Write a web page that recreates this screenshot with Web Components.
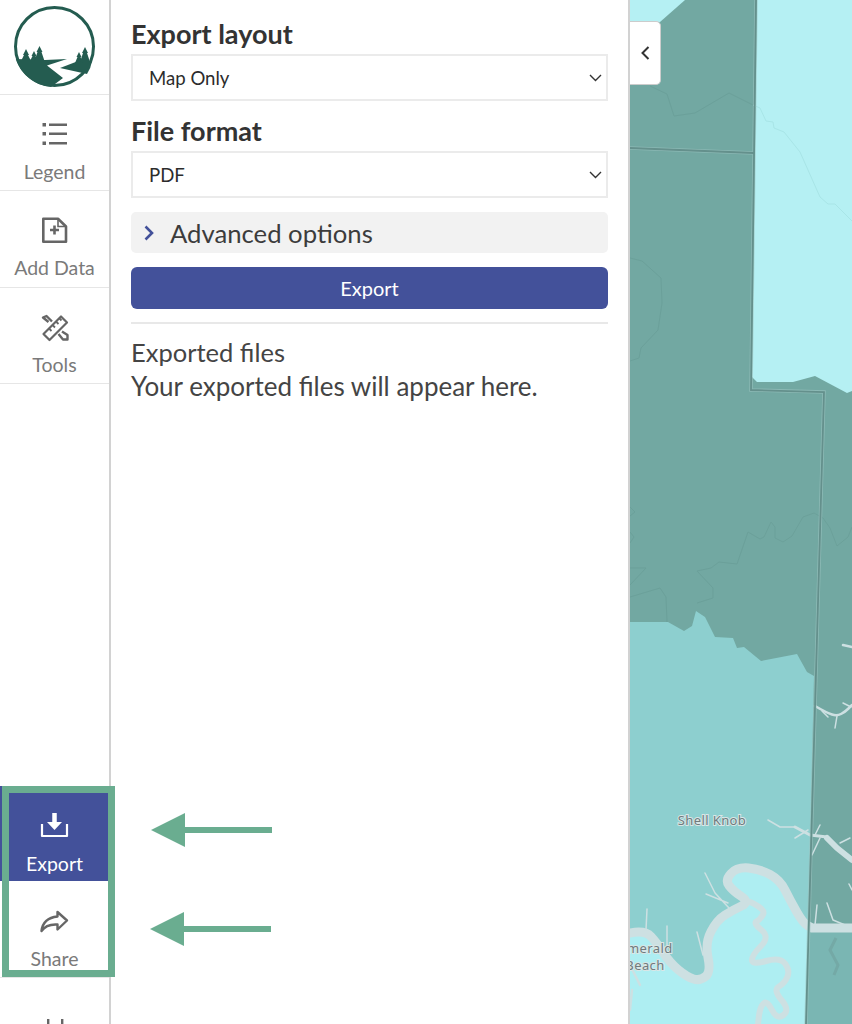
<!DOCTYPE html>
<html>
<head>
<meta charset="utf-8">
<title>Export</title>
<style>
    html, body { margin: 0; padding: 0; height: 100%; overflow: hidden; background: #fff; }
    body { font-family: "Lato", "Noto Sans", sans-serif; }
</style>
</head>
<body>
<app-shell>
    <app-rail slot="rail">
        <rail-item label="Legend" icon="legend"></rail-item>
        <rail-item label="Add Data" icon="add"></rail-item>
        <rail-item label="Tools" icon="tools"></rail-item>
        <div slot="bottom" style="flex: none">
            <rail-item label="Export" icon="export" active style="--pad: 27px; --gap: 12px; height: 95px"></rail-item>
            <rail-item label="Share" icon="share" style="--pad: 29px; --gap: 10px"></rail-item>
            <rail-item icon="more" style="--pad: 41px"></rail-item>
        </div>
    </app-rail>
    <export-panel slot="panel"></export-panel>
    <map-view slot="map"></map-view>
</app-shell>
<tour-callout></tour-callout>

<script>
const ICONS = {
    legend: `<svg width="27" height="27" viewBox="0 0 27 27" fill="#666">
        <rect x="1.500" y="2" width="3.500" height="3.500"/><rect x="1.500" y="11" width="3.500" height="3.500"/><rect x="1.500" y="20.500" width="3.500" height="3.500"/>
        <rect x="8" y="2.500" width="18" height="2.500"/><rect x="8" y="11.500" width="18" height="2.500"/><rect x="8" y="21" width="18" height="2.500"/></svg>`,
    add: `<svg width="27" height="27" viewBox="0 0 27 27" fill="none" stroke="#666" stroke-width="2.600">
        <path d="M2.300 1.800H17L25 9.500V24.700H2.300Z" stroke-linejoin="round"/><path d="M17 1.800V9.500H25" stroke-width="1.600"/>
        <path d="M13.500 8.500V17.500M9 13H18"/></svg>`,
    tools: `<svg width="28" height="28" viewBox="0 0 28 28" fill="none" stroke="#666" stroke-width="2.200" stroke-linejoin="round">
        <path d="M20 2.500L26 8.500L8.500 26L2.500 20Z"/>
        <path d="M8 14.500L10.500 17M11.500 11L14 13.500M15 7.500L17.500 10M18.500 4.500L20.500 6.500" stroke-width="1.800"/>
        <path d="M7.500 8L2 3.500L5.500 2L11 7.500M17.500 20L22 25.500H26.500V21L21 17.500" stroke-width="2.400"/></svg>`,
    export: `<svg width="29" height="26" viewBox="0 0 29 26" fill="none" stroke="#fff" stroke-width="2.200">
        <path d="M2 11V23H27V11" stroke-linejoin="round"/>
        <path d="M14.500 0V10.500" stroke-width="4.500"/><path d="M7 9H22L14.500 17Z" fill="#fff" stroke="none"/></svg>`,
    share: `<svg width="29" height="24" viewBox="0 0 29 24" fill="none" stroke="#666" stroke-width="2.400" stroke-linejoin="round">
        <path d="M17.500 2L27 10.500L17.500 19.500V14.500C10 14 4.500 16.500 1.500 21C2.500 12.500 8.500 7.500 17.500 6.500Z"/></svg>`,
    more: `<svg width="27" height="27" viewBox="0 0 27 27" fill="#666"><rect x="6" y="0" width="2.400" height="27"/><rect x="20" y="0" width="2.400" height="27"/></svg>`
};

// rounds a list of points through their midpoints, used for the river and its banks
function smooth(points) {
    let d = `M${points[0][0]} ${points[0][1]}`;
    for (let i = 1; i < points.length - 1; i++) {
        const mx = (points[i][0] + points[i + 1][0]) / 2;
        const my = (points[i][1] + points[i + 1][1]) / 2;
        d += `Q${points[i][0]} ${points[i][1]} ${mx} ${my}`;
    }
    const last = points[points.length - 1];
    return d + `L${last[0]} ${last[1]}`;
}

const RIVER = [[630,933],[645,930],[657,943],[670,963],[687,977],[700,981],[711,972],[705,943],[717,920],[733,910],[750,902],[733,891],[725,880],[737,867],[760,869],[780,880],[790,900],[803,923],[812,928]];
const BEND = [[750,902],[766,909],[760,920],[753,923],[770,937],[752,955],[752,965],[780,957],[790,970],[785,983],[773,990],[790,1010],[777,1020],[767,1000],[760,1007],[758,1024]];

class AppShell extends HTMLElement {
    constructor() {
        super();
        this.attachShadow({ mode: "open" }).innerHTML = `
        <style>
            :host { display: grid; grid-template-columns: 111px 519px 222px; height: 1024px; overflow: hidden; }
        </style>
        <slot name="rail"></slot>
        <slot name="panel"></slot>
        <slot name="map"></slot>`;
    }
}

class AppRail extends HTMLElement {
    constructor() {
        super();
        this.attachShadow({ mode: "open" }).innerHTML = `
        <style>
            :host { display: flex; flex-direction: column; height: 1024px; overflow: hidden; box-sizing: border-box; border-right: 2px solid #d2d2d2; background: #fff; }
            .logo { height: 94px; flex: none; border-bottom: 1px solid #e6e6e6; display: flex; justify-content: center; }
            .gap { flex: none; height: 402px; }
        </style>
        <div class="logo">
            <svg width="109" height="94" viewBox="0 0 109 94">
                <circle cx="54.500" cy="46.500" r="39" fill="none" stroke="#245c50" stroke-width="3"/>
                <g fill="#245c50">
                    <path d="M15.800 59 L45 60 L67 59 L47 65.500 L63 78 L51 87 A40.500 40.500 0 0 1 15.800 59Z"/>
                    <path d="M60 68 L77 61.500 L92 61 Q91 68 87 74 Z"/>
                    <path d="M26 49 L29 55 L28 55 L31 61 L21 61 L24 55 L23 55Z"/>
                    <path d="M34 51 L36.500 56 L35.500 56 L38 61 L30 61 L32.500 56 L31.500 56Z"/>
                    <path d="M39.500 46 L42.500 52 L41.500 52 L44.500 61 L34.500 61 L37.500 52 L36.500 52Z"/>
                    <path d="M79 52 L81.500 57 L80.500 57 L83 63 L75 63 L77.500 57 L76.500 57Z"/>
                    <path d="M85 47 L88 53 L87 53 L90 62 L80 62 L83 53 L82 53Z"/>
                </g>
            </svg>
        </div>
        <slot></slot>
        <div class="gap"></div>
        <slot name="bottom"></slot>`;
    }
}

class RailItem extends HTMLElement {
    constructor() {
        super();
        this.attachShadow({ mode: "open" });
    }
    connectedCallback() {
        const label = this.getAttribute("label");
        this.shadowRoot.innerHTML = `
        <style>
            :host { display: block; flex: none; height: 96.400px; box-sizing: border-box; border-bottom: 1px solid #e6e6e6; font-size: 19.500px; color: #7a7a7a; text-align: center; }
            :host([active]) { background: #43519a; color: #fff; border-bottom: 0; }
            .box { display: flex; flex-direction: column; align-items: center; padding-top: var(--pad, 26px); box-sizing: border-box; gap: var(--gap, 12px); }
            svg { display: block; flex: none; }
            .icon { height: 27px; }
            span { line-height: 24px; }
        </style>
        <div class="box">
            <div class="icon">${ICONS[this.getAttribute("icon")]}</div>
            ${label ? `<span>${label}</span>` : ""}
        </div>`;
    }
}

class FieldSelect extends HTMLElement {
    constructor() {
        super();
        this.attachShadow({ mode: "open" }).innerHTML = `
        <style>
            :host { display: flex; align-items: center; justify-content: space-between; height: 47px; box-sizing: border-box; border: 2px solid #ebebeb; padding: 0 4px 0 16px; font-size: 18.600px; color: #2c2c2c; background: #fff; }
        </style>
        <slot></slot>
        <svg width="13" height="8" viewBox="0 0 13 8" fill="none" stroke="#333" stroke-width="1.400"><path d="M1 1L6.500 6.500L12 1"/></svg>`;
    }
}

class ExportPanel extends HTMLElement {
    constructor() {
        super();
        this.attachShadow({ mode: "open" }).innerHTML = `
        <style>
            :host { display: block; box-sizing: border-box; height: 1024px; padding: 16px 20px 0 20px; border-right: 2px solid #d2d2d2; background: #fff; color: #444; }
            h3 { margin: 0 0 4px; font-size: 27px; line-height: 35px; font-weight: 700; color: #333; }
            h3 + field-select { margin-top: -1px; }
            .second { margin-top: 12px; }
            .advanced { margin-top: 14px; height: 41px; background: #f2f2f2; border-radius: 5px; display: flex; align-items: center; font-size: 25.700px; gap: 16px; padding-left: 13px; color: #3c3c3c; }
            button { display: block; width: 100%; margin-top: 14px; height: 42px; border: 0; border-radius: 6px; background: #43519a; color: #fff; font: inherit; font-size: 20px; }
            hr { border: 0; border-top: 2px solid #e8e8e8; margin: 13px 0 11px; }
            p { margin: 0; font-size: 26px; line-height: 34px; }
            .title { font-size: 25.500px; }
        </style>
        <h3>Export layout</h3>
        <field-select>Map Only</field-select>
        <h3 class="second">File format</h3>
        <field-select>PDF</field-select>
        <div class="advanced">
            <svg width="10" height="16" viewBox="0 0 10 16" fill="none" stroke="#43519a" stroke-width="2.600"><path d="M1.500 1.500L8 8L1.500 14.500"/></svg>
            <span>Advanced options</span>
        </div>
        <button>Export</button>
        <hr>
        <p class="title">Exported files</p>
        <p>Your exported files will appear here.</p>`;
    }
}

class MapView extends HTMLElement {
    constructor() {
        super();
        this.attachShadow({ mode: "open" }).innerHTML = `
        <style>
            :host { display: block; position: relative; height: 1024px; overflow: hidden; background: #72a8a2; }
            svg { display: block; }
            .tab { position: absolute; left: 0; top: 21px; width: 31px; height: 64px; box-sizing: border-box; background: #fff; border: 1px solid #ccc; border-left: 0; border-radius: 0 5px 5px 0; display: flex; align-items: center; justify-content: center; }
            text { font-family: "Noto Sans", sans-serif; font-size: 13px; letter-spacing: .4px; fill: #6f7b7d; stroke: #d9e6e6; stroke-width: 2px; paint-order: stroke; }
        </style>
        <svg width="222" height="1024" viewBox="630 0 222 1024">
            <!-- land and lake fills -->
            <rect x="630" y="0" width="222" height="1024" fill="#72a8a2"/>
            <path d="M630 0H685L660 22H630Z" fill="#b5f0f3"/>
            <path d="M757 0H852V391L847 393L815 376L793 382L757 382L752 377Z" fill="#b5f0f3"/>
            <path d="M630 622H668L684 631L692 626L696 611L705 617L715 637L733 638L737 648L744 647L761 661L797 654L807 672L814 676L806 1024H630Z" fill="#8dcfcf"/>
            <path d="${smooth(RIVER)}L806 1024H630Z" fill="#aeeef2"/>
            <path d="M810 925H852V1024H806Z" fill="#7ab6b3"/>
            <path d="M836 938L830 950L838 965L834 975" fill="none" stroke="#74a9a6" stroke-width="3"/>

            <!-- faint county lines -->
            <g fill="none" stroke="#6a9f99" stroke-width="1" opacity=".8">
                <path d="M650 86L667 94L674 116L695 113L729 93L753 105"/>
                <path d="M630 258L642 261L661 278L662 303L658 330L641 348L639 358L630 361"/>
                <path d="M630 597L660 588L666 597L667 622"/>
                <path d="M697 603L713 598L713 588L697 571L711 568L719 562L737 564L748 532L760 539L764 537L771 522L775 527L775 538L783 542L792 536L803 517L814 513L823 518L830 528L837 546L848 537L852 527"/>
                <path d="M630 507L635 512L630 516M630 532L634 537L630 543M630 568H646L630 585"/>
            </g>
            <path d="M753 105L760 108L766 121L773 122L774 128L784 132L800 152L820 197L828 204L835 204L852 221" fill="none" stroke="#a8e5e7" stroke-width="1"/>

            <!-- river -->
            <g fill="none" stroke="#cde0e2" stroke-linejoin="round" stroke-linecap="round">
                <path stroke-width="9" d="${smooth(RIVER)}L852 928"/>
                <path stroke-width="6" d="${smooth(BEND)}"/>
                <path stroke-width="1.500" d="M705 873L715 893L729 908M706 894L728 903M647 909L646 930M667 926V945M697 932L703 955M768 820L780 827L795 827"/>
                <path stroke-width="3" d="M795 827L810 835L827 837"/>
                <path stroke-width="6" d="M827 838L837 848L852 860"/>
                <path stroke-width="1.500" d="M817 905L815 925M827 903L833 920L845 925M815 835L820 825M840 843L850 838M795 838L808 830M812 855L820 838"/>
                <path stroke-width="2.500" d="M630 965L640 985M632 990L630 1010"/>
                <path stroke-width="2.500" d="M843 645L852 647"/>
                <path stroke-width="2.500" d="${smooth([[815,706],[827,713],[837,716],[845,712],[852,705]])}"/>
                <path stroke-width="1.500" d="M837 716L835 728M843 703L851 707M822 711L828 717M849 884L852 890"/>
            </g>

            <!-- boundaries -->
            <g fill="none" stroke="#9dc5c2" stroke-width="3.500" opacity=".6">
                <path d="M756 0L751 390L824 392L806 1024"/>
                <path d="M630 148L754 153"/>
            </g>
            <g fill="none" stroke="#64908c" stroke-width="1.800">
                <path d="M756 0L751 390L824 392L806 1024"/>
                <path d="M630 148L754 153"/>
            </g>

            <text x="712" y="825" text-anchor="middle">Shell Knob</text>
            <text x="646" y="953" text-anchor="middle">Emerald</text>
            <text x="645" y="970" text-anchor="middle">Beach</text>
        </svg>
        <div class="tab">
            <svg width="9" height="14" viewBox="0 0 9 14" fill="none" stroke="#333" stroke-width="2"><path d="M7.500 1L1.500 7L7.500 13"/></svg>
        </div>`;
    }
}

// green annotation drawn over the screenshot
class TourCallout extends HTMLElement {
    constructor() {
        super();
        this.attachShadow({ mode: "open" }).innerHTML = `
        <style>
            :host { display: block; }
            .frame { position: absolute; left: 2px; top: 786px; width: 113px; height: 191px; box-sizing: border-box; border: 7px solid #6aad90; }
            svg { position: absolute; left: 0; top: 0; }
        </style>
        <div class="frame"></div>
        <svg width="300" height="1024" viewBox="0 0 300 1024" fill="#6aad90">
            <path d="M151 830L185 813V827H272V833H185V847Z"/>
            <path d="M150 929L184 912V926H271V932H184V946Z"/>
        </svg>`;
    }
}

customElements.define("rail-item", RailItem);
customElements.define("app-rail", AppRail);
customElements.define("field-select", FieldSelect);
customElements.define("export-panel", ExportPanel);
customElements.define("map-view", MapView);
customElements.define("tour-callout", TourCallout);
customElements.define("app-shell", AppShell);
</script>
</body>
</html>
